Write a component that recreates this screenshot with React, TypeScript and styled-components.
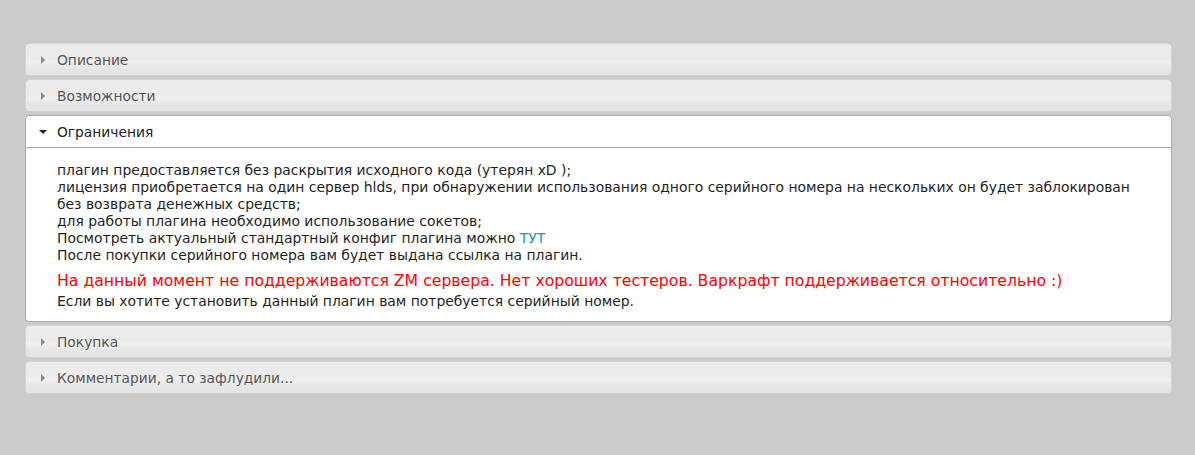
import React, { useState } from 'react';
import styled, { createGlobalStyle } from 'styled-components';

const Global = createGlobalStyle`
  html, body {
    margin: 0;
    padding: 0;
    background: #cbcbcb;
  }
  body {
    font-family: "DejaVu Sans", Verdana, sans-serif;
  }
`;

const Page = styled.div`
  padding: 43px 23px 40px 25px;
`;

const Accordion = styled.div`
  display: flex;
  flex-direction: column;
  gap: 3px;
`;

const Section = styled.div`
  display: flex;
  flex-direction: column;
`;

const Header = styled.div<{ $active: boolean }>`
  display: flex;
  align-items: center;
  height: 31px;
  padding: 0 0 0 13px;
  border: 1px solid ${(p) => (p.$active ? '#aaaaaa' : '#d3d3d3')};
  border-radius: ${(p) => (p.$active ? '4px 4px 0 0' : '4px')};
  background: ${(p) =>
    p.$active
      ? '#ffffff'
      : 'linear-gradient(to bottom, #ececec 0%, #ebebeb 45%, #f0f0f0 58%, #e7e7e7 75%, #e4e4e4 100%)'};
  color: ${(p) => (p.$active ? '#212121' : '#555555')};
  font-size: 13.8px;
  cursor: pointer;
  user-select: none;
`;

const Arrow = styled.span<{ $open: boolean }>`
  display: inline-block;
  width: 0;
  height: 0;
  ${(p) =>
    p.$open
      ? `
    border-left: 4px solid transparent;
    border-right: 4px solid transparent;
    border-top: 4px solid #222;
    margin-right: 10px;
  `
      : `
    border-top: 4px solid transparent;
    border-bottom: 4px solid transparent;
    border-left: 4px solid #888;
    margin-left: 2px;
    margin-right: 12px;
  `}
`;

const Content = styled.div`
  border: 1px solid #aaaaaa;
  border-top: 0;
  border-radius: 0 0 4px 4px;
  background: #ffffff;
  color: #1e1e1e;
  padding: 14px 31px 11px 31px;
  font-size: 13.9px;
  line-height: 16.9px;
`;

const Line = styled.div``;

const Warning = styled.div`
  color: #ff0000;
  font-size: 15.7px;
  line-height: 20px;
  margin: 7.5px 0 2.5px;
`;

const Link = styled.a`
  color: #1b8fd9;
  text-decoration: none;
`;

const sections = [
  'Описание',
  'Возможности',
  'Ограничения',
  'Покупка',
  'Комментарии, а то зафлудили...',
];

export default function App() {
  const [open, setOpen] = useState(2);
  return (
    <Page>
      <Global />
      <Accordion>
        {sections.map((title, i) => (
          <Section key={title}>
            <Header $active={open === i} onClick={() => setOpen(i)}>
              <Arrow $open={open === i} />
              {title}
            </Header>
            {open === i && (
              <Content>
                {i === 2 ? (
                  <>
                    <Line>плагин предоставляется без раскрытия исходного кода (утерян xD );</Line>
                    <Line>
                      лицензия приобретается на один сервер hlds, при обнаружении использования одного серийного
                      номера на нескольких он будет заблокирован без возврата денежных средств;
                    </Line>
                    <Line>для работы плагина необходимо использование сокетов;</Line>
                    <Line>
                      Посмотреть актуальный стандартный конфиг плагина можно <Link href="#">ТУТ</Link>
                    </Line>
                    <Line>После покупки серийного номера вам будет выдана ссылка на плагин.</Line>
                    <Warning>
                      На данный момент не поддерживаются ZM сервера. Нет хороших тестеров. Варкрафт поддерживается
                      относительно :)
                    </Warning>
                    <Line>Если вы хотите установить данный плагин вам потребуется серийный номер.</Line>
                  </>
                ) : (
                  <Line>{title}</Line>
                )}
              </Content>
            )}
          </Section>
        ))}
      </Accordion>
    </Page>
  );
}
